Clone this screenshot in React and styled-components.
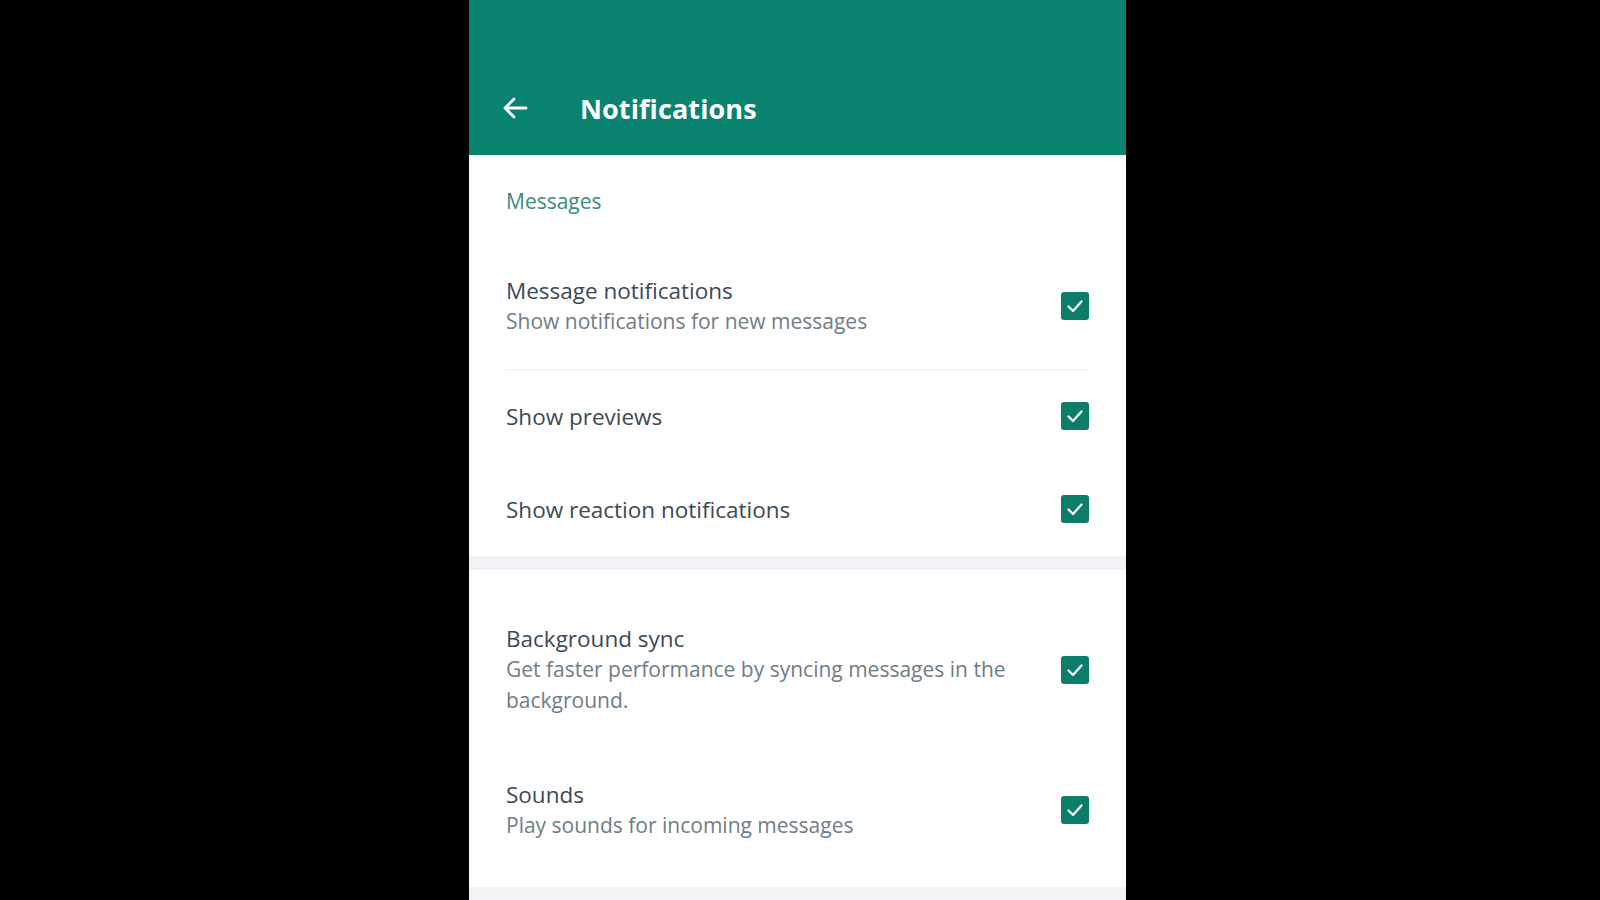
import React from "react";
import styled, { createGlobalStyle } from "styled-components";

const Global = createGlobalStyle`
  html, body {
    margin: 0;
    padding: 0;
    background: #000;
    font-family: "Open Sans", "Noto Sans", sans-serif;
  }
`;

const Page = styled.div`
  width: 1600px;
  height: 900px;
  overflow: hidden;
  display: flex;
`;

const Panel = styled.div`
  width: 657px;
  margin-left: 469px;
  background: #f0f2f5;
  display: flex;
  flex-direction: column;
`;

const Header = styled.header`
  height: 155px;
  background: #0a8270;
  display: flex;
  align-items: flex-end;
  box-sizing: border-box;
  padding: 0 0 17px 31px;
  flex-shrink: 0;
`;

const HeaderRow = styled.div`
  height: 60px;
  display: flex;
  align-items: center;
`;

const BackButton = styled.button`
  width: 30px;
  height: 30px;
  padding: 0;
  border: none;
  background: none;
  display: flex;
  align-items: center;
  justify-content: center;
  margin-right: 50px;
  cursor: pointer;
`;

const Title = styled.h1`
  margin: 0;
  color: #fff;
  font-size: 27px;
  font-weight: 700;
  letter-spacing: 0.1px;
`;

const Section = styled.section`
  background: #fff;
  padding: ${(p) => p.pad || "0"};
  margin-bottom: 14px;
`;

const SectionLabel = styled.div`
  padding: 31px 37px 28px;
  color: #3b8a7a;
  font-size: 21px;
  line-height: 30px;
`;

const Row = styled.div`
  display: flex;
  align-items: center;
  margin: 0 37px;
  padding: 31px 0;
  border-bottom: ${(p) => (p.divider ? "1px solid #eef0f1" : "none")};
`;

const Texts = styled.div`
  flex: 1;
  padding-right: 40px;
  line-height: 31px;
`;

const RowTitle = styled.div`
  color: #3b4a54;
  font-size: 22.5px;
`;

const RowSub = styled.div`
  color: #6f7d85;
  font-size: 21px;
  line-height: 31.5px;
`;

const Box = styled.div`
  width: 28px;
  height: 28px;
  border-radius: 3px;
  background: #0c7d69;
  display: flex;
  align-items: center;
  justify-content: center;
  flex-shrink: 0;
`;

const Check = () => (
  <Box>
    <svg width="20" height="20" viewBox="0 0 20 20">
      <path
        d="M3.5 10.5 L8 15 L16.5 5.5"
        fill="none"
        stroke="#fff"
        strokeWidth="2.3"
        strokeLinecap="round"
        strokeLinejoin="round"
      />
    </svg>
  </Box>
);

const Setting = ({ title, sub, divider }) => (
  <Row divider={divider}>
    <Texts>
      <RowTitle>{title}</RowTitle>
      {sub && <RowSub>{sub}</RowSub>}
    </Texts>
    <Check />
  </Row>
);

export default function App() {
  return (
    <Page>
      <Global />
      <Panel>
        <Header>
          <HeaderRow>
            <BackButton aria-label="Back">
              <svg width="28" height="28" viewBox="0 0 28 28">
                <path
                  d="M25 14 H4 M13 5 L4 14 L13 23"
                  fill="none"
                  stroke="#fff"
                  strokeWidth="2.8"
                  strokeLinecap="round"
                  strokeLinejoin="round"
                />
              </svg>
            </BackButton>
            <Title>Notifications</Title>
          </HeaderRow>
        </Header>
        <Section>
          <SectionLabel>Messages</SectionLabel>
          <Setting
            title="Message notifications"
            sub="Show notifications for new messages"
            divider
          />
          <Setting title="Show previews" />
          <Setting title="Show reaction notifications" />
        </Section>
        <Section pad="22px 0 15px">
          <Setting
            title="Background sync"
            sub="Get faster performance by syncing messages in the background."
          />
          <Setting title="Sounds" sub="Play sounds for incoming messages" />
        </Section>
      </Panel>
    </Page>
  );
}
